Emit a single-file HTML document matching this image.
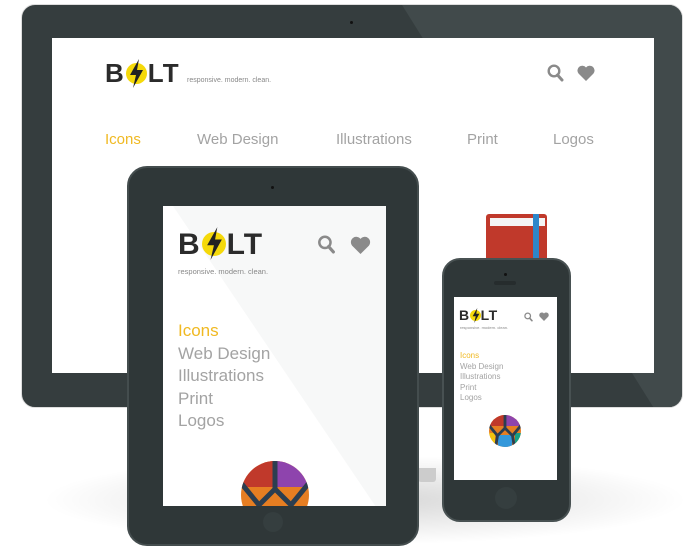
<!DOCTYPE html>
<html style="overflow:hidden;height:560px"><head><style>
*{margin:0;padding:0;box-sizing:border-box}
body{width:700px;height:560px;background:#fff;position:relative;overflow:hidden;font-family:"Liberation Sans",sans-serif}
.a{position:absolute}
.logo{font-weight:bold;color:#2b2b2b;letter-spacing:1px;white-space:nowrap}
.bolt{display:inline-block;border-radius:50%;background:#f5d90a;position:relative;vertical-align:middle}
.nav{color:#a3a3a3;white-space:nowrap}
.y{color:#f0b922}
.tag{color:#888;white-space:nowrap}
</style></head><body>
<!-- shadow -->
<div class="a" style="left:40px;top:455px;width:650px;height:90px;border-radius:50%;background:radial-gradient(ellipse at center,rgba(0,0,0,.16),rgba(0,0,0,0) 70%)"></div>
<!-- monitor -->
<div class="a" style="left:21px;top:4px;width:662px;height:404px;border-radius:14px;background:#353d3e;border:1px solid #ddd;overflow:hidden">
<div class="a" style="left:380px;top:0;width:400px;height:404px;background:#414a4b;transform:skewX(32deg);transform-origin:top left"></div>
</div>
<div class="a" style="left:350px;top:21px;width:3px;height:3px;border-radius:50%;background:#111"></div>
<div class="a" style="left:52px;top:38px;width:602px;height:335px;background:#fff"></div>
<div class="a" style="left:418px;top:468px;width:18px;height:14px;background:#ccc;border-radius:0 0 3px 3px"></div>
<!-- monitor content -->
<div class="a logo" style="left:105px;top:60px;font-size:26px;line-height:26px">B<span class="bolt" style="width:21px;height:21px;margin:-4px 1px 0"><svg class="a" style="left:3px;top:-4px" width="15" height="29" viewBox="0 0 15 29"><path d="M10 0L1 16h6L4 29 14 11H8z" fill="#222"/></svg></span>LT</div>
<div class="a tag" style="left:187px;top:77px;font-size:7px">responsive. modern. clean.</div>
<svg class="a" style="left:547px;top:64px" width="17" height="18" viewBox="0 0 17 18"><circle cx="7" cy="7" r="5.3" fill="none" stroke="#8a8a8a" stroke-width="2.4"/><path d="M10.5 11l4.5 5" stroke="#8a8a8a" stroke-width="3" stroke-linecap="round"/></svg>
<svg class="a" style="left:577px;top:65px" width="18" height="16" viewBox="0 0 18 16"><path d="M9 16L1.5 8.5A4.5 4.5 0 0 1 9 2.5a4.5 4.5 0 0 1 7.5 6z" fill="#8a8a8a"/></svg>
<div class="a nav y" style="left:105px;top:131px;font-size:15px">Icons</div>
<div class="a nav" style="left:197px;top:131px;font-size:15px">Web Design</div>
<div class="a nav" style="left:336px;top:131px;font-size:15px">Illustrations</div>
<div class="a nav" style="left:467px;top:131px;font-size:15px">Print</div>
<div class="a nav" style="left:553px;top:131px;font-size:15px">Logos</div>
<!-- book -->
<div class="a" style="left:486px;top:214px;width:61px;height:46px;background:#c0392b;border-radius:3px 3px 0 0"></div>
<div class="a" style="left:490px;top:218px;width:55px;height:8px;background:#f4f4f4"></div>
<div class="a" style="left:533px;top:214px;width:6px;height:46px;background:#2e86c9"></div>
<!-- tablet -->
<div class="a" style="left:127px;top:166px;width:292px;height:380px;border-radius:20px;background:#2f3738;border:2px solid #444d4e"></div>
<div class="a" style="left:271px;top:186px;width:3px;height:3px;border-radius:50%;background:#111"></div>
<div class="a" style="left:163px;top:206px;width:223px;height:300px;background:#fff;overflow:hidden">
<div class="a" style="top:0;width:400px;height:300px;background:#f7f8f8;transform:skewX(34deg);transform-origin:top left;left:10px"></div>
<div class="a" style="left:78px;top:255px;width:68px;height:68px;border-radius:50%;overflow:hidden;background:#e67e22">
<div class="a" style="left:0;top:0;width:34px;height:26px;background:#c0392b"></div>
<div class="a" style="left:34px;top:0;width:34px;height:26px;background:#8e44ad"></div>
<svg class="a" style="left:0;top:0" width="68" height="68" viewBox="0 0 68 68"><path d="M34 0V28M0 22l18 22 16-16 16 16 18-22M18 44l-4 24M50 44l4 24" stroke="#2c3e50" stroke-width="5" fill="none"/></svg>
</div>
</div>
<div class="a logo" style="left:178px;top:230px;font-size:30px;line-height:30px">B<span class="bolt" style="width:24px;height:24px;margin:-4px 1px 0"><svg class="a" style="left:4px;top:-5px" width="17" height="33" viewBox="0 0 15 29"><path d="M10 0L1 16h6L4 29 14 11H8z" fill="#222"/></svg></span>LT</div>
<div class="a tag" style="left:178px;top:267px;font-size:7.5px">responsive. modern. clean.</div>
<svg class="a" style="left:317px;top:235px" width="19" height="19" viewBox="0 0 17 18"><circle cx="7" cy="7" r="5.3" fill="none" stroke="#8a8a8a" stroke-width="2.4"/><path d="M10.5 11l4.5 5" stroke="#8a8a8a" stroke-width="3" stroke-linecap="round"/></svg>
<svg class="a" style="left:350px;top:236px" width="21" height="18" viewBox="0 0 18 16"><path d="M9 16L1.5 8.5A4.5 4.5 0 0 1 9 2.5a4.5 4.5 0 0 1 7.5 6z" fill="#8a8a8a"/></svg>
<div class="a nav" style="left:178px;top:320px;font-size:17px;line-height:22.6px"><span class="y">Icons</span><br>Web Design<br>Illustrations<br>Print<br>Logos</div>
<div class="a" style="left:263px;top:512px;width:20px;height:20px;border-radius:50%;background:#353e3f"></div>
<!-- phone -->
<div class="a" style="left:442px;top:258px;width:129px;height:264px;border-radius:18px;background:#2f3738;border:2px solid #485152"></div>
<div class="a" style="left:504px;top:273px;width:3px;height:3px;border-radius:50%;background:#111"></div>
<div class="a" style="left:494px;top:281px;width:22px;height:4px;border-radius:2px;background:#262c2d"></div>
<div class="a" style="left:454px;top:297px;width:103px;height:183px;background:#fff"></div>
<div class="a" style="left:495px;top:487px;width:22px;height:22px;border-radius:50%;background:#353e3f"></div>
<div class="a logo" style="left:459px;top:308px;font-size:14px;line-height:14px;letter-spacing:.5px">B<span class="bolt" style="width:11px;height:11px;margin:-2px 0 0"><svg class="a" style="left:2px;top:-2px" width="8" height="15" viewBox="0 0 15 29"><path d="M10 0L1 16h6L4 29 14 11H8z" fill="#222"/></svg></span>LT</div>
<div class="a tag" style="left:460px;top:325px;font-size:4px">responsive. modern. clean.</div>
<svg class="a" style="left:524px;top:312px" width="9" height="10" viewBox="0 0 17 18"><circle cx="7" cy="7" r="5.3" fill="none" stroke="#8a8a8a" stroke-width="2.4"/><path d="M10.5 11l4.5 5" stroke="#8a8a8a" stroke-width="3" stroke-linecap="round"/></svg>
<svg class="a" style="left:539px;top:312px" width="10" height="9" viewBox="0 0 18 16"><path d="M9 16L1.5 8.5A4.5 4.5 0 0 1 9 2.5a4.5 4.5 0 0 1 7.5 6z" fill="#8a8a8a"/></svg>
<div class="a nav" style="left:460px;top:351px;font-size:8px;line-height:10.5px"><span class="y">Icons</span><br>Web Design<br>Illustrations<br>Print<br>Logos</div>
<div class="a" style="left:489px;top:415px;width:32px;height:32px;border-radius:50%;overflow:hidden;background:#e67e22">
<div class="a" style="left:0;top:0;width:16px;height:11px;background:#c0392b"></div>
<div class="a" style="left:16px;top:0;width:16px;height:11px;background:#8e44ad"></div>
<div class="a" style="left:9px;top:20px;width:14px;height:12px;background:#3498db"></div>
<div class="a" style="left:0;top:18px;width:6px;height:14px;background:#f1c40f"></div>
<div class="a" style="left:26px;top:18px;width:6px;height:14px;background:#16a085"></div>
<svg class="a" style="left:0;top:0" width="32" height="32" viewBox="0 0 68 68"><path d="M34 0V28M0 22l18 22 16-16 16 16 18-22M18 44l-4 24M50 44l4 24" stroke="#2c3e50" stroke-width="6" fill="none"/></svg>
</div>
</body></html>
